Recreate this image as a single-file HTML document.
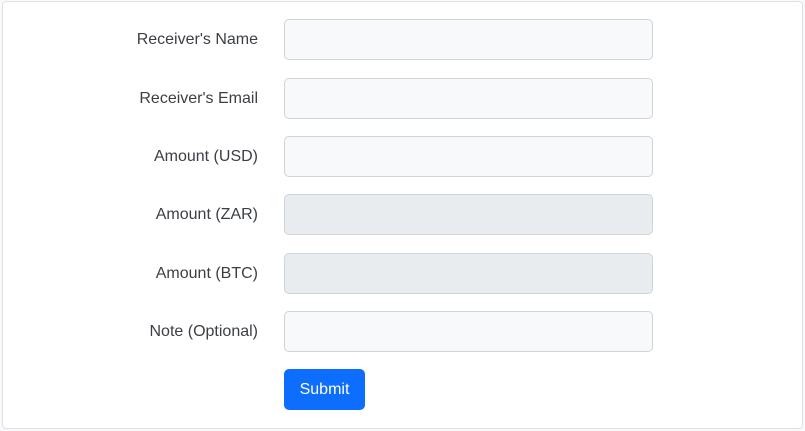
<!DOCTYPE html>
<html><head><style>
html,body{margin:0;padding:0;width:805px;height:431px;background:#f8f9fa;overflow:hidden;font-family:"Liberation Sans",sans-serif;}
.card{position:absolute;left:2px;top:1px;width:799px;height:426px;background:#fff;border:1px solid #dfe1e4;border-radius:4px;}
.lbl{position:absolute;right:547px;font-size:16px;color:#3b3f44;line-height:20px;text-align:right;white-space:nowrap;}
.in{position:absolute;left:284px;width:367px;height:39px;border:1px solid #ced4da;border-radius:5px;background:#f8f9fa;}
.dis{background:#e9ecef;}
.btn{position:absolute;left:284px;top:369px;width:81px;height:41px;background:#0d6efd;border-radius:5px;color:#fff;font-size:16px;line-height:41px;text-align:center;}
</style></head><body>
<div class="card"></div>
<div class="lbl" style="top:30px">Receiver's Name</div><div class="in" style="top:19px"></div>
<div class="lbl" style="top:89px">Receiver's Email</div><div class="in" style="top:78px"></div>
<div class="lbl" style="top:147px">Amount (USD)</div><div class="in" style="top:136px"></div>
<div class="lbl" style="top:205px">Amount (ZAR)</div><div class="in dis" style="top:194px"></div>
<div class="lbl" style="top:264px">Amount (BTC)</div><div class="in dis" style="top:253px"></div>
<div class="lbl" style="top:322px">Note (Optional)</div><div class="in" style="top:311px"></div>
<div class="btn">Submit</div>
</body></html>
